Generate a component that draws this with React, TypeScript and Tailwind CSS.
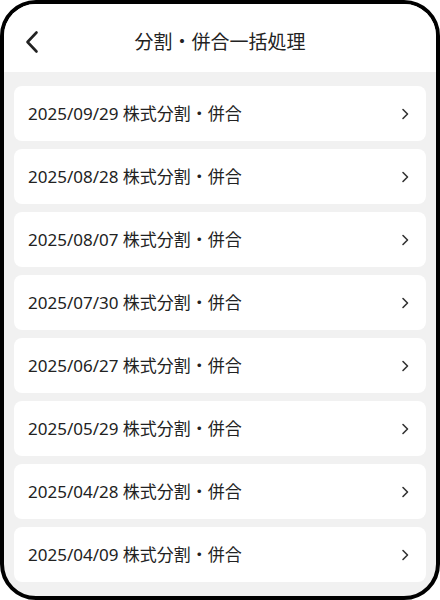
import React from 'react';

const items = [
  '2025/09/29',
  '2025/08/28',
  '2025/08/07',
  '2025/07/30',
  '2025/06/27',
  '2025/05/29',
  '2025/04/28',
  '2025/04/09',
];

function ChevronRight() {
  return (
    <svg width="10" height="14" viewBox="0 0 10 14" fill="none" stroke="#333" strokeWidth="1.6" strokeLinecap="round" strokeLinejoin="round">
      <path d="M3 2.5 L7.5 7 L3 11.5" />
    </svg>
  );
}

function ChevronLeft() {
  return (
    <svg width="16" height="24" viewBox="0 0 16 24" fill="none" stroke="#222" strokeWidth="2.6" strokeLinecap="round" strokeLinejoin="round">
      <path d="M12.5 2.5 L3.5 12 L12.5 21.5" />
    </svg>
  );
}

export default function App() {
  return (
    <div className="w-[440px] h-[600px] bg-white" style={{ fontFamily: '"Noto Sans", "Noto Sans CJK JP", sans-serif' }}>
      <div className="w-full h-full border-4 border-black rounded-[36px] overflow-hidden flex flex-col bg-[#f1f1f1]">
        {/* header */}
        <div className="h-[68px] shrink-0 bg-white flex items-center relative">
          <div className="absolute left-[20px] top-[26px]">
            <ChevronLeft />
          </div>
          <div className="flex-1 text-center text-[19px] text-[#222] leading-none pt-[8px]">分割・併合一括処理</div>
        </div>

        {/* list */}
        <div className="flex flex-col gap-[8px] px-[10px] pt-[14px]">
          {items.map(d => (
            <div key={d} className="h-[55px] shrink-0 bg-white rounded-[8px] flex items-center justify-between pl-[14px] pr-[16px]">
              <span className="text-[17px] text-[#222]">{d} 株式分割・併合</span>
              <ChevronRight />
            </div>
          ))}
        </div>
      </div>
    </div>
  );
}
